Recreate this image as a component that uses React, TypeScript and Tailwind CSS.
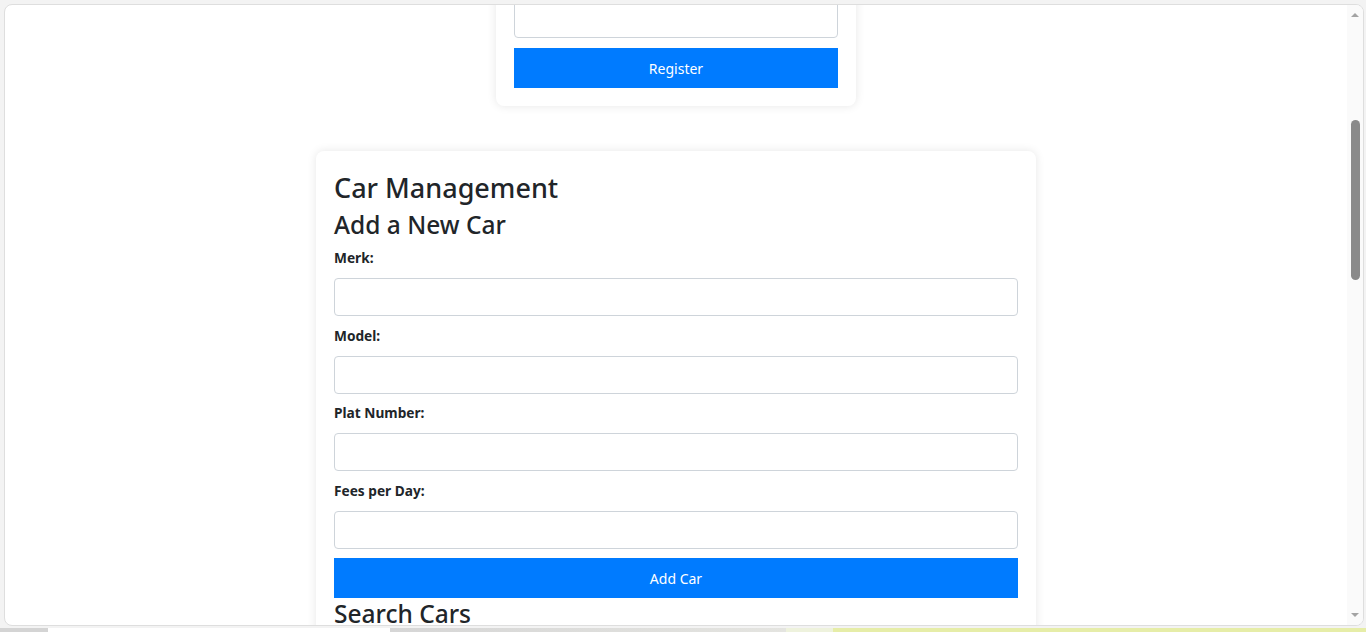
const font = { fontFamily: '"Noto Sans", "Open Sans", sans-serif' }

function Field({ label }: { label: string }) {
  return (
    <div className="flex flex-col">
      <label className="text-[13.7px] leading-[20px] font-bold text-[#212529] mb-[10px]">{label}</label>
      <input className="h-[38px] border border-[#ced4da] rounded-[4px] mb-[9.6px] bg-white outline-none" />
    </div>
  )
}

function Scrollbar() {
  return (
    <div className="w-[16px] h-full bg-[#fafafa] flex flex-col items-center justify-between py-[8px]">
      <div className="w-0 h-0 border-l-[4px] border-r-[4px] border-b-[4px] border-l-transparent border-r-transparent border-b-[#a3a3a3]" />
      <div className="flex-1 w-full flex flex-col items-center">
        <div className="mt-[103px] w-[9px] h-[160px] rounded-full bg-[#8a8a8a]" />
      </div>
      <div className="w-0 h-0 border-l-[4px] border-r-[4px] border-t-[4px] border-l-transparent border-r-transparent border-t-[#a3a3a3]" />
    </div>
  )
}

export default function App() {
  return (
    <div className="w-[1366px] h-[632px] bg-[#f3f3f3] overflow-hidden flex flex-col" style={font}>
      <div className="ml-[4px] mt-[4px] w-[1360px] h-[622px] border border-[#dedede] rounded-[8px] bg-white overflow-hidden flex">
        {/* page */}
        <div className="w-[1342px] h-full overflow-hidden flex flex-col items-center">
          {/* Register card (scrolled off the top) */}
          <div className="-mt-[23px] w-[360px] bg-white rounded-[8px] shadow-[0_0_10px_rgba(0,0,0,0.1)] p-[18px] flex flex-col gap-[10px]">
            <input className="h-[38px] border border-[#ced4da] rounded-[4px] bg-white outline-none" />
            <button className="h-[40px] bg-[#007bff] text-white text-[14px]">Register</button>
          </div>

          {/* Car management */}
          <div className="mt-[45px] w-[720px] bg-white rounded-[8px] shadow-[0_0_10px_rgba(0,0,0,0.1)] px-[18px] pt-[20px] pb-[18px] flex flex-col">
            <h2 className="text-[27px] leading-[33px] font-medium text-[#212529]">Car Management</h2>
            <h3 className="mt-[6px] mb-[9px] text-[24.5px] leading-[29px] font-medium text-[#212529]">Add a New Car</h3>
            <Field label="Merk:" />
            <Field label="Model:" />
            <Field label="Plat Number:" />
            <Field label="Fees per Day:" />
            <button className="h-[40px] bg-[#007bff] text-white text-[14px]">Add Car</button>
            <h3 className="mt-[1px] text-[24.5px] leading-[29px] font-medium text-[#212529]">Search Cars</h3>
          </div>
        </div>
        <Scrollbar />
      </div>
      <div className="mt-[2px] h-[4px] flex">
        <div className="w-[48px] bg-[#d4d4d4]" />
        <div className="w-[342px] bg-white" />
        <div className="w-[396px] bg-gradient-to-r from-[#d6d6d6] to-[#e4e4e0]" />
        <div className="w-[47px] bg-[#eef2dd]" />
        <div className="flex-1 bg-[#e6eda8]" />
      </div>
    </div>
  )
}
